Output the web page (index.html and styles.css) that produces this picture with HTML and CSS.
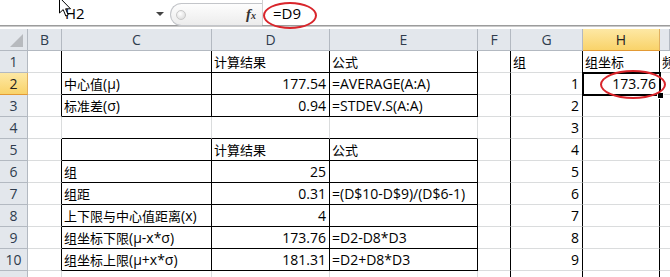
FILE: index.html
```html
<!DOCTYPE html>
<html lang="zh-CN">
<head>
  <meta charset="UTF-8" />
  <title>Sheet1</title>
  <link rel="stylesheet" href="styles.css">
</head>
<body>

  <div class="fbar">
    <div class="namebox">
      <span class="name">H2</span>
      <span class="caret"></span>
      <svg class="cursor" width="13" height="21" viewBox="0 0 13 21">
        <path d="M0.5 0.5 L0.5 16 L4.2 12.6 L6.8 19 L9.2 18 L6.6 11.8 L11.5 11.8 Z" fill="#fff" stroke="#000" stroke-width="1" stroke-linejoin="round"/>
      </svg>
    </div>
    <div class="pill">
      <span class="knob"></span>
      <span class="fx">f<small>x</small></span>
    </div>
    <div class="formula">
      =D9
      <span class="ring"></span>
    </div>
  </div>
  <div class="rule"></div>

  <div class="sheet" id="sheet"></div>

  <script>
    const rows = [
      ['', '', '计算结果', '公式', '', '组', '组坐标', '频数'],
      ['', '中心值(μ)', '177.54', '=AVERAGE(A:A)', '', '1', '173.76', ''],
      ['', '标准差(σ)', '0.94', '=STDEV.S(A:A)', '', '2', '', ''],
      ['', '', '', '', '', '3', '', ''],
      ['', '', '计算结果', '公式', '', '4', '', ''],
      ['', '组', '25', '', '', '5', '', ''],
      ['', '组距', '0.31', '=(D$10-D$9)/(D$6-1)', '', '6', '', ''],
      ['', '上下限与中心值距离(x)', '4', '', '', '7', '', ''],
      ['', '组坐标下限(μ-x*σ)', '173.76', '=D2-D8*D3', '', '8', '', ''],
      ['', '组坐标上限(μ+x*σ)', '181.31', '=D2+D8*D3', '', '9', '', ''],
      ['', '', '', '', '', '', '', '']
    ];

    const sheet = document.getElementById('sheet');
    let html = '<div class="hd corner"><i class="tri"></i></div>';

    // column I is cut at the window edge, its letter is out of view
    ['B', 'C', 'D', 'E', 'F', 'G', 'H', ''].forEach(letter => {
      html += `<div class="hd col${letter === 'H' ? ' sel' : ''}">${letter}</div>`;
    });

    rows.forEach((row, r) => {
      const n = r + 1;
      const boxed = n <= 3 || (n >= 5 && n <= 10);
      const label = n <= 10 ? n : '';
      html += `<div class="hd rowno${n === 2 ? ' sel' : ''}">${label}</div>`;

      row.forEach((value, c) => {
        const cls = ['cell'];
        if (boxed && c >= 1 && c <= 3) cls.push('k');
        if (boxed && c === 0) cls.push('kr');
        if (n === 4 && c >= 1 && c <= 3) cls.push('kb');
        if (c >= 4 && c <= 6) cls.push('kr');
        if (/^[\d.]+$/.test(value)) cls.push('num');
        if (c === 7) cls.push('clip');

        let text = value.replace(/[\u4e00-\u9fff]+/g, m => `<span class="zh">${m}</span>`);
        if (n === 2 && c === 6) {
          cls.push('active');
          text += '<span class="selbox"><i class="handle"></i></span><span class="ring2"></span>';
        }
        html += `<div class="${cls.join(' ')}">${text}</div>`;
      });
    });

    sheet.innerHTML = html;
  </script>

</body>
</html>
```

FILE: styles.css
```css
:root {
  --grid: #dadcdd;
  --head-bg: #e3e7ec;
  --head-line: #b3b9c1;
  --head-text: #2f3c4d;
  --mark: #d9252b;
}

* {
  box-sizing: border-box;
  margin: 0;
  padding: 0;
}

body {
  width: 670px;
  height: 277px;
  overflow: hidden;
  background: #fff;
  color: #000;
  font-family: 'Open Sans', 'Noto Sans CJK SC', sans-serif;
  font-size: 14px;
}

/* formula bar */

.fbar {
  display: flex;
  height: 25px;
}

.namebox {
  position: relative;
  width: 170px;
  display: flex;
  align-items: center;
  padding: 0 6px 0 65px;
  font-size: 15px;
}

.name {
  flex: 1;
}

.caret {
  width: 0;
  height: 0;
  margin-top: 3px;
  border-left: 4px solid transparent;
  border-right: 4px solid transparent;
  border-top: 4px solid #444;
}

.cursor {
  position: absolute;
  left: 59px;
  top: -3px;
}

.pill {
  width: 92px;
  height: 23px;
  margin-top: 3px;
  display: flex;
  align-items: center;
  justify-content: space-between;
  padding: 0 6px 0 5px;
  border: 1px solid #c3c5c9;
  border-right: none;
  border-radius: 12px 0 0 12px;
  background: linear-gradient(#fdfdfd, #ececec);
}

.knob {
  width: 10px;
  height: 10px;
  border-radius: 50%;
  border: 1px solid #c8c8c8;
  background: radial-gradient(circle at 40% 35%, #fff, #d5d5d5);
}

.fx {
  font-family: 'Liberation Serif', serif;
  font-style: italic;
  font-weight: bold;
  font-size: 15px;
  color: #333;
}

.fx small {
  font-size: 10px;
}

.formula {
  position: relative;
  flex: 1;
  padding-left: 10px;
  border-left: 1px solid #d0d0d0;
  font-size: 15px;
  line-height: 26px;
}

.ring {
  position: absolute;
  left: 0;
  top: 2px;
  width: 54px;
  height: 27px;
  border: 2px solid var(--mark);
  border-radius: 50%;
  z-index: 2;
}

.rule {
  height: 4px;
  border-top: 1px solid #9c9c9c;
  box-shadow: inset 0 1px 0 #c9c9c9;
}

/* grid */

.sheet {
  display: grid;
  grid-template-columns: 28px 34px 150px 118px 148px 33px 72px 77px 10px;
  grid-auto-rows: 22px;
  height: 248px;
  overflow: hidden;
}

.hd {
  background: var(--head-bg);
  border-right: 1px solid var(--head-line);
  border-bottom: 1px solid var(--head-line);
  color: var(--head-text);
  text-align: center;
  line-height: 21px;
  font-size: 14px;
}

.hd.sel {
  background: linear-gradient(#fde8a4, #f9d36a);
  border-right-color: #e0b060;
  border-bottom-color: #e39a35;
  color: #222;
}

.corner {
  display: flex;
  align-items: flex-end;
  justify-content: flex-end;
  padding: 0 4px 3px 0;
}

.tri {
  width: 0;
  height: 0;
  border-left: 13px solid transparent;
  border-bottom: 13px solid #b7babe;
}

.cell {
  border-right: 1px solid var(--grid);
  border-bottom: 1px solid var(--grid);
  padding: 0 2px;
  line-height: 21px;
  white-space: nowrap;
}

.cell.k {
  border-right-color: #000;
  border-bottom-color: #000;
}

.cell.kr {
  border-right-color: #000;
}

.cell.kb {
  border-bottom-color: #000;
}

.cell.num {
  text-align: right;
  padding-right: 3px;
}

.cell.clip {
  overflow: hidden;
  border-right: none;
}

.zh {
  font-family: 'Noto Sans CJK SC', sans-serif;
  font-size: 13px;
}

.active {
  position: relative;
}

.selbox {
  position: absolute;
  left: -1px;
  top: -1px;
  width: 79px;
  height: 24px;
  border: 2px solid #000;
}

.handle {
  position: absolute;
  right: -5px;
  bottom: -5px;
  width: 7px;
  height: 7px;
  background: #000;
  border: 1px solid #fff;
}

.ring2 {
  position: absolute;
  left: 17px;
  top: -3px;
  width: 66px;
  height: 29px;
  border: 2px solid var(--mark);
  border-radius: 50%;
  z-index: 2;
}
```
